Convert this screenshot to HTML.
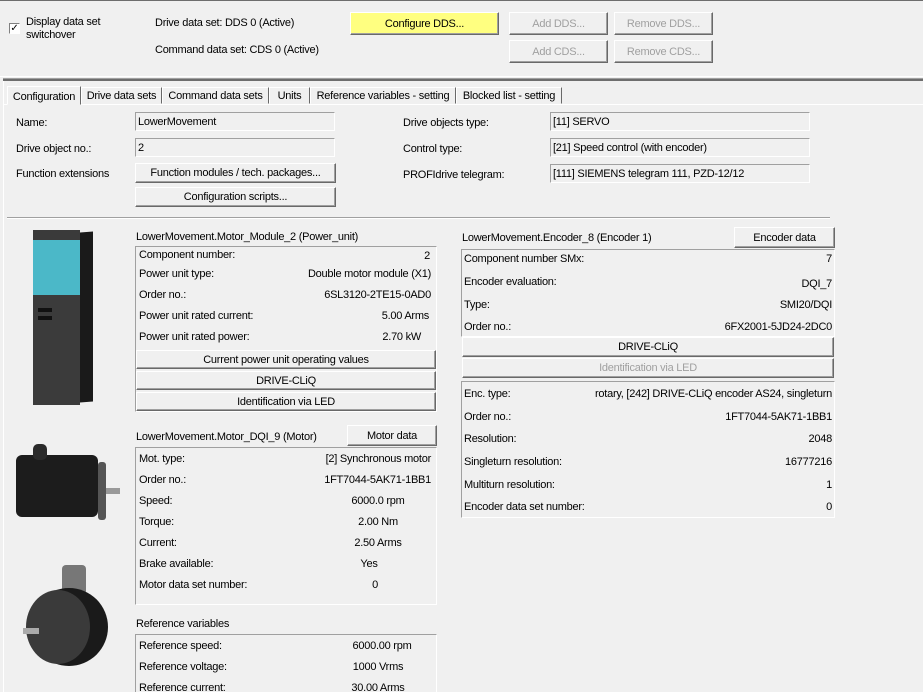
<!DOCTYPE html>
<html style="overflow:hidden;width:923px;height:692px"><head><meta charset="utf-8"><style>
html,body{overflow:hidden}
body{margin:0;width:923px;height:692px;background:#f0f0f0;position:relative;overflow:hidden;font-family:"Liberation Sans",Arial,sans-serif;font-size:11px;letter-spacing:-0.25px;color:#000}
.a{position:absolute;white-space:nowrap;line-height:13px;margin-top:1px}
.btn{position:absolute;box-sizing:border-box;background:#f0f0f0;border:1px solid;border-color:#fff #696969 #696969 #fff;box-shadow:inset -1px -1px 0 #a0a0a0;text-align:center;line-height:normal;display:flex;align-items:center;justify-content:center;white-space:nowrap}
.dis{color:#a0a0a0}
.fld{position:absolute;box-sizing:border-box;border:1px solid;border-color:#a0a0a0 #fff #fff #a0a0a0;padding-left:2px;display:flex;align-items:center;white-space:nowrap}
.box{position:absolute;box-sizing:border-box;border:1px solid;border-color:#a0a0a0 #fff #fff #a0a0a0}
.tab{position:absolute;top:87px;height:17px;box-sizing:border-box;border:1px solid;border-color:#fff #696969 transparent #fff;text-align:center;line-height:16px;white-space:nowrap}
.r{position:absolute;white-space:nowrap;line-height:13px;text-align:right;margin-top:1px}
.c{position:absolute;white-space:nowrap;line-height:13px;text-align:center;width:130px;margin-top:1px}
</style></head><body>
<div style="position:absolute;left:0;top:0;width:923px;height:1px;background:#6d6d6d"></div>
<div style="position:absolute;left:9px;top:23px;width:11px;height:11px;box-sizing:border-box;border:1px solid;border-color:#808080 #fff #fff #808080;background:#fff;font-size:10px;line-height:9px;text-align:center">✓</div>
<div class="a" style="left:26px;top:15px">Display data set</div>
<div class="a" style="left:26px;top:28px">switchover</div>
<div class="a" style="left:155px;top:16px">Drive data set: DDS 0 (Active)</div>
<div class="a" style="left:155px;top:43px">Command data set: CDS 0 (Active)</div>
<div class="btn" style="left:350px;top:12px;width:149px;height:23px;background:#ffff80">Configure DDS...</div>
<div class="btn dis" style="left:509px;top:12px;width:99px;height:23px">Add DDS...</div>
<div class="btn dis" style="left:614px;top:12px;width:99px;height:23px">Remove DDS...</div>
<div class="btn dis" style="left:509px;top:40px;width:99px;height:23px">Add CDS...</div>
<div class="btn dis" style="left:614px;top:40px;width:99px;height:23px">Remove CDS...</div>
<div style="position:absolute;left:0;top:76px;width:923px;height:1px;background:#fff"></div>
<div style="position:absolute;left:3px;top:78px;width:920px;height:1px;background:#a0a0a0"></div>
<div style="position:absolute;left:3px;top:79px;width:920px;height:2px;background:#6d6d6d"></div>
<div style="position:absolute;left:3px;top:81px;width:1px;height:611px;background:#fff"></div>
<div style="position:absolute;left:3px;top:104px;width:920px;height:1px;background:#fff"></div>
<div class="tab" style="left:7px;top:86px;height:19px;width:74px;background:#f0f0f0;line-height:20px">Configuration</div>
<div class="tab" style="left:81px;width:81px">Drive data sets</div>
<div class="tab" style="left:162px;width:107px">Command data sets</div>
<div class="tab" style="left:269px;width:41px">Units</div>
<div class="tab" style="left:310px;width:146px">Reference variables - setting</div>
<div class="tab" style="left:456px;width:106px">Blocked list - setting</div>

<div class="a" style="left:16px;top:116px">Name:</div>
<div class="fld" style="left:135px;top:112px;width:200px;height:19px">LowerMovement</div>
<div class="a" style="left:16px;top:142px">Drive object no.:</div>
<div class="fld" style="left:135px;top:138px;width:200px;height:19px">2</div>
<div class="a" style="left:16px;top:167px">Function extensions</div>
<div class="btn" style="left:135px;top:163px;width:201px;height:20px">Function modules / tech. packages...</div>
<div class="btn" style="left:135px;top:187px;width:201px;height:20px">Configuration scripts...</div>
<div class="a" style="left:403px;top:116px">Drive objects type:</div>
<div class="fld" style="left:550px;top:112px;width:260px;height:19px">[11] SERVO</div>
<div class="a" style="left:403px;top:142px">Control type:</div>
<div class="fld" style="left:550px;top:138px;width:260px;height:19px">[21] Speed control (with encoder)</div>
<div class="a" style="left:403px;top:168px">PROFIdrive telegram:</div>
<div class="fld" style="left:550px;top:164px;width:260px;height:19px">[111] SIEMENS telegram 111, PZD-12/12</div>
<div style="position:absolute;left:7px;top:217px;width:823px;height:1px;background:#a0a0a0"></div>
<div style="position:absolute;left:7px;top:218px;width:823px;height:1px;background:#fff"></div>

<!-- power unit image -->
<div style="position:absolute;left:80px;top:232px;width:13px;height:170px;background:#1a1a1a;transform:skewY(-4deg)"></div>
<div style="position:absolute;left:33px;top:230px;width:47px;height:10px;background:#3a3a3a"></div>
<div style="position:absolute;left:33px;top:240px;width:47px;height:55px;background:#4bb8c8"></div>
<div style="position:absolute;left:33px;top:295px;width:47px;height:110px;background:#3b3b3b"></div>
<div style="position:absolute;left:38px;top:308px;width:14px;height:4px;background:#111"></div>
<div style="position:absolute;left:38px;top:316px;width:14px;height:4px;background:#111"></div>

<div class="a" style="left:136px;top:230px">LowerMovement.Motor_Module_2 (Power_unit)</div>
<div class="box" style="left:135px;top:246px;width:302px;height:166px"></div>
<div class="a" style="left:139px;top:248px">Component number:</div><div class="r" style="right:493px;top:249px">2</div>
<div class="a" style="left:139px;top:267px">Power unit type:</div><div class="r" style="right:492px;top:267px">Double motor module (X1)</div>
<div class="a" style="left:139px;top:288px">Order no.:</div><div class="r" style="right:492px;top:288px">6SL3120-2TE15-0AD0</div>
<div class="a" style="left:139px;top:309px">Power unit rated current:</div><div class="r" style="right:494px;top:309px">5.00 Arms</div>
<div class="a" style="left:139px;top:330px">Power unit rated power:</div><div class="r" style="right:502px;top:330px">2.70 kW</div>
<div class="btn" style="left:136px;top:350px;width:300px;height:19px">Current power unit operating values</div>
<div class="btn" style="left:136px;top:371px;width:300px;height:19px">DRIVE-CLiQ</div>
<div class="btn" style="left:136px;top:392px;width:300px;height:19px">Identification via LED</div>

<!-- motor image -->
<div style="position:absolute;left:16px;top:455px;width:82px;height:62px;background:#1c1c1c;border-radius:6px"></div>
<div style="position:absolute;left:33px;top:444px;width:14px;height:16px;background:#2a2a2a;border-radius:5px"></div>
<div style="position:absolute;left:98px;top:462px;width:8px;height:58px;background:#555;border-radius:3px"></div>
<div style="position:absolute;left:106px;top:488px;width:14px;height:6px;background:#999"></div>

<div class="a" style="left:136px;top:430px">LowerMovement.Motor_DQI_9 (Motor)</div>
<div class="btn" style="left:347px;top:425px;width:90px;height:21px">Motor data</div>
<div class="box" style="left:135px;top:447px;width:302px;height:158px"></div>
<div class="a" style="left:139px;top:452px">Mot. type:</div><div class="r" style="right:492px;top:452px">[2] Synchronous motor</div>
<div class="a" style="left:139px;top:473px">Order no.:</div><div class="r" style="right:492px;top:473px">1FT7044-5AK71-1BB1</div>
<div class="a" style="left:139px;top:494px">Speed:</div><div class="c" style="left:313px;top:494px">6000.0 rpm</div>
<div class="a" style="left:139px;top:515px">Torque:</div><div class="c" style="left:313px;top:515px">2.00 Nm</div>
<div class="a" style="left:139px;top:536px">Current:</div><div class="c" style="left:313px;top:536px">2.50 Arms</div>
<div class="a" style="left:139px;top:557px">Brake available:</div><div class="c" style="left:304px;top:557px">Yes</div>
<div class="a" style="left:139px;top:578px">Motor data set number:</div><div class="c" style="left:310px;top:578px">0</div>

<!-- encoder image -->
<div style="position:absolute;left:62px;top:565px;width:24px;height:30px;background:#777;border-radius:4px"></div>
<div style="position:absolute;left:30px;top:588px;width:78px;height:78px;background:#1a1a1a;border-radius:50%"></div>
<div style="position:absolute;left:26px;top:590px;width:64px;height:74px;background:#3a3a3a;border-radius:50%"></div>
<div style="position:absolute;left:23px;top:628px;width:16px;height:6px;background:#aaa"></div>

<div class="a" style="left:136px;top:617px">Reference variables</div>
<div class="box" style="left:135px;top:634px;width:302px;height:58px;border-bottom:none"></div>
<div class="a" style="left:139px;top:639px">Reference speed:</div><div class="c" style="left:317px;top:639px">6000.00 rpm</div>
<div class="a" style="left:139px;top:660px">Reference voltage:</div><div class="c" style="left:313px;top:660px">1000 Vrms</div>
<div class="a" style="left:139px;top:681px">Reference current:</div><div class="c" style="left:313px;top:681px">30.00 Arms</div>

<div class="a" style="left:462px;top:231px">LowerMovement.Encoder_8 (Encoder 1)</div>
<div class="btn" style="left:734px;top:227px;width:101px;height:21px">Encoder data</div>
<div class="box" style="left:461px;top:249px;width:374px;height:88px"></div>
<div class="a" style="left:464px;top:252px">Component number SMx:</div><div class="r" style="right:91px;top:252px">7</div>
<div class="a" style="left:464px;top:275px">Encoder evaluation:</div><div class="r" style="right:91px;top:277px">DQI_7</div>
<div class="a" style="left:464px;top:298px">Type:</div><div class="r" style="right:91px;top:298px">SMI20/DQI</div>
<div class="a" style="left:464px;top:320px">Order no.:</div><div class="r" style="right:91px;top:320px">6FX2001-5JD24-2DC0</div>
<div class="btn" style="left:462px;top:337px;width:372px;height:20px">DRIVE-CLiQ</div>
<div class="btn dis" style="left:462px;top:358px;width:372px;height:20px">Identification via LED</div>
<div class="box" style="left:461px;top:381px;width:374px;height:137px"></div>
<div class="a" style="left:464px;top:387px">Enc. type:</div><div class="r" style="right:91px;top:387px">rotary, [242] DRIVE-CLiQ encoder AS24, singleturn</div>
<div class="a" style="left:464px;top:410px">Order no.:</div><div class="r" style="right:91px;top:410px">1FT7044-5AK71-1BB1</div>
<div class="a" style="left:464px;top:432px">Resolution:</div><div class="r" style="right:91px;top:432px">2048</div>
<div class="a" style="left:464px;top:455px">Singleturn resolution:</div><div class="r" style="right:91px;top:455px">16777216</div>
<div class="a" style="left:464px;top:478px">Multiturn resolution:</div><div class="r" style="right:91px;top:478px">1</div>
<div class="a" style="left:464px;top:500px">Encoder data set number:</div><div class="r" style="right:91px;top:500px">0</div>
</body></html>
